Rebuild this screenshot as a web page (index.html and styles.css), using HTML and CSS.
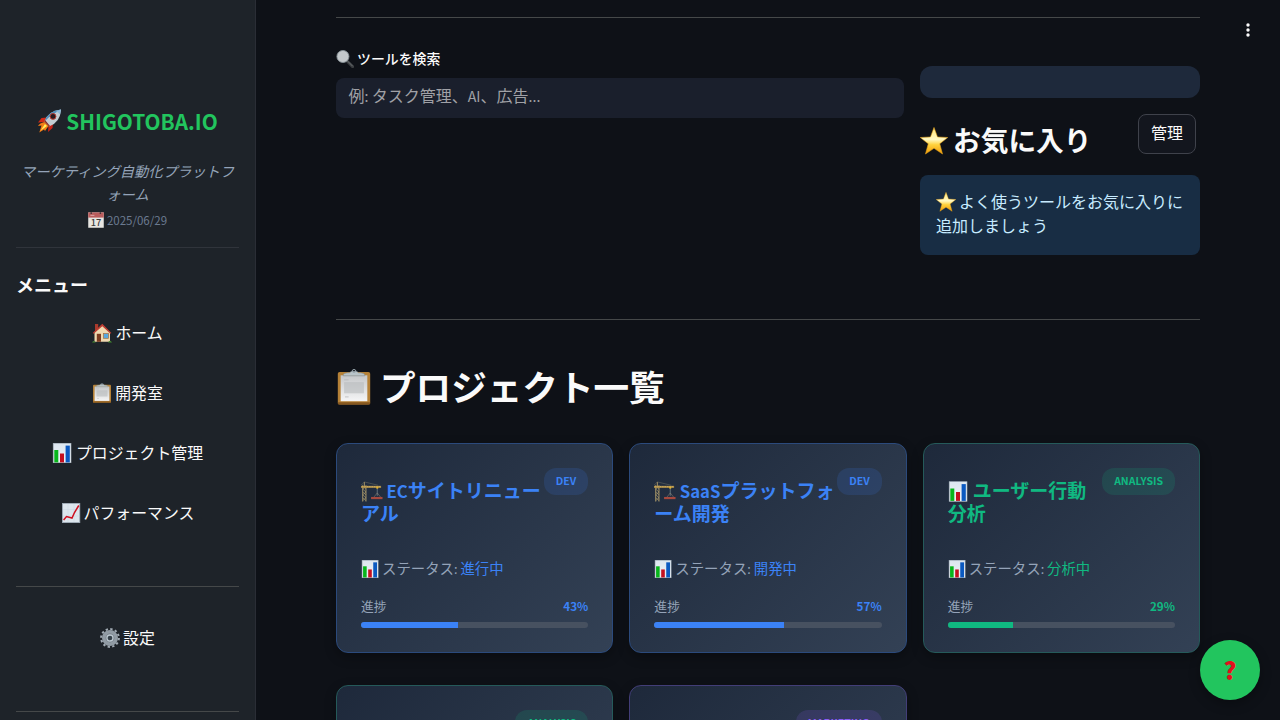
FILE: index.html
```html
<!DOCTYPE html>
<html lang="ja">
<head>
<meta charset="utf-8">
<title>SHIGOTOBA.IO</title>
<link rel="stylesheet" href="styles.css">
</head>
<body>
<svg class="defs" aria-hidden="true">
  <defs>
    <linearGradient id="gStar" x1="0" y1="0" x2="0" y2="1"><stop offset="0" stop-color="#ffe477"/><stop offset=".45" stop-color="#fff9c4"/><stop offset=".65" stop-color="#ffd23c"/><stop offset="1" stop-color="#ef9a0a"/></linearGradient>
    <linearGradient id="gSheet" x1="0" y1="0" x2="0" y2="1"><stop offset="0" stop-color="#c5c7c9"/><stop offset="1" stop-color="#f5f5f6"/></linearGradient>
    <linearGradient id="gChart" x1="0" y1="0" x2="0" y2="1"><stop offset="0" stop-color="#dce6ef"/><stop offset="1" stop-color="#eff3f7"/></linearGradient>
    <symbol id="bars" viewBox="0 0 20 20"><rect x="1.200" y=".2" width="17.800" height="19.600" fill="url(#gChart)" stroke="#a9b5c0" stroke-width=".6"/><rect x="2.300" y="7" width="4" height="12.400" fill="#08b51b"/><rect x="8" y="10.500" width="4" height="8.900" fill="#c5101f"/><rect x="13.600" y="2.600" width="4.200" height="16.800" fill="#0b59c0"/></symbol>
    <symbol id="trend" viewBox="0 0 20 20"><rect x="1.400" y=".3" width="17.400" height="19.400" fill="#dde6ed" stroke="#9facb8" stroke-width=".8"/><path d="M2 6.500H18.500M2 13H18.500M7 1V19M13 1V19" stroke="#cad6e0" stroke-width=".5"/><path d="M2.600 17L5.500 13.500L11 15L13.500 9.500L17.800 2.500" fill="none" stroke="#cf1020" stroke-width="1.500"/></symbol>
    <symbol id="clip" viewBox="0 0 20 20"><rect x="1" y="1.700" width="18" height="18" rx="1" fill="#b58137"/><rect x="1" y="18.500" width="18" height="1.200" rx=".5" fill="#85571f"/><rect x="2.600" y="3.500" width="14.800" height="14.400" fill="url(#gSheet)"/><rect x="4.500" y="7.300" width="11" height="6.200" fill="#b8babc" opacity=".6"/><path d="M4.500 6H7M5 15.500H7" stroke="#b2b4b6" stroke-width=".4"/><path d="M4 3.800C4 2.500 5 2.200 7.500 2.100L8.600 1.200H11.400L12.500 2.100C15 2.200 16 2.500 16 3.800Z" fill="#b9c4c9" stroke="#7c888d" stroke-width=".3"/><circle cx="10" cy="1.100" r=".9" fill="none" stroke="#97a6ae" stroke-width=".5"/></symbol>
    <symbol id="home" viewBox="0 0 20 20"><rect x="3" y="1" width="3.200" height="7" fill="#a93a2d"/><path d="M2.500 9L10.500 2L18 9V18.800H2.500Z" fill="#f0d9b0"/><path d="M.7 10L10.300 .8L19.400 10L18.500 10.800L10.300 3.300L1.700 10.800Z" fill="#bd3b31"/><rect x="4.800" y="10.800" width="4.200" height="8" fill="#7d3c20"/><rect x="11.500" y="10.500" width="5" height="4.800" fill="#58a8df" stroke="#a17243" stroke-width=".7"/><path d="M0 19.500Q1.500 16.500 3.800 19.500ZM16 19.500Q18 16.200 20 19.500Z" fill="#41862f"/></symbol>
    <symbol id="gear" viewBox="0 0 20 20"><circle cx="10" cy="10" r="8.900" fill="none" stroke="#a1aab3" stroke-width="2" stroke-dasharray="2.330 2.330"/><circle cx="10" cy="10" r="6.200" fill="#707981" stroke="#919ba4" stroke-width="3.600"/><circle cx="10" cy="10" r="3" fill="#36414a" stroke="#bdc9d2" stroke-width="1.300"/></symbol>
    <symbol id="rocket" viewBox="0 0 24 24"><path d="M9.500 8.500L4 9L.5 13.500L7.500 13Z" fill="#d22a18"/><path d="M15.500 14.500L15 19L10.500 23L11 16.500Z" fill="#c82217"/><path d="M7 13Q2 14 .5 17L4 16.500L1.800 23.500L6.500 20.500L7.500 22L11 17Z" fill="#f47b16"/><path d="M7.500 15L3 21.800L9.500 17Z" fill="#fff15a"/><path d="M7 12.500Q10.500 2 23.500 .6Q22.500 14 11.500 17.500Z" fill="#c4cdd3"/><path d="M7 12.500Q10.500 2 23.500 .6L16 5Q11 8 7 12.500Z" fill="#4f8ebc"/><path d="M18.500 1.900L23.500 .6L22.700 5.500Z" fill="#8db8d6"/><circle cx="15.500" cy="7.400" r="2.900" fill="#281a20" stroke="#b53b30" stroke-width="1"/><path d="M7 12.500L11.500 17.500L12.500 17L7.500 11Z" fill="#8d261b"/></symbol>
    <symbol id="cal" viewBox="0 0 20 20"><rect x=".3" y=".5" width="19.400" height="19.200" fill="#e7e5e1"/><rect x=".3" y=".5" width="19.400" height="6.500" fill="#ba5d5d"/><path d="M4 .2V2.500M15.500 .2V2.500" stroke="#413437" stroke-width="1.700"/><path d="M3 4.200H8" stroke="#dfabaa" stroke-width="1.200"/><text x="10" y="17.500" class="cal-day">17</text></symbol>
    <symbol id="lens" viewBox="0 0 20 20"><path d="M12 12L18.500 18.500" stroke="#3a3d40" stroke-width="3.300" stroke-linecap="round"/><path d="M12.500 12L18.500 18" stroke="#7b8083" stroke-width=".8"/><circle cx="7.700" cy="7.200" r="6.700" fill="#c3c8cb" stroke="#899399" stroke-width="1"/></symbol>
    <symbol id="star" viewBox="0 0 20 20"><path d="M10 .3L12.500 7.100L19.800 7.500L14.100 12L16.100 19.300L10 15.200L3.900 19.300L5.900 12L.2 7.500L7.500 7.100Z" fill="url(#gStar)" stroke="#e8a317" stroke-width=".4" stroke-linejoin="round"/></symbol>
    <symbol id="crane" viewBox="0 0 23 21"><path d="M1.800 4V21M5.200 4V21M3.500 .5V5" stroke="#a9976a" stroke-width="1"/><path d="M1.800 20L5.200 17L1.800 14L5.200 11L1.800 8L5.200 5M1.800 17L5.200 20M1.800 11L5.200 14M1.800 5L5.200 8" fill="none" stroke="#b6a26e" stroke-width=".6"/><path d="M0 4.600H21V6.700H0Z" fill="#ad8e49"/><path d="M3.500 .5L18 4M3.500 .5L0 4" stroke="#777665" stroke-width=".5"/><path d="M1 5.500H20" stroke="#e1c176" stroke-width=".6" stroke-dasharray="1.500 1"/><path d="M17 6V15" stroke="#829399" stroke-width=".7"/><rect x="16" y="5.500" width="2" height="2" fill="#e5b329"/><path d="M17 12L13 17H21Z" fill="none" stroke="#9a8d78" stroke-width=".5"/><rect x="10.500" y="16.200" width="12" height="2.300" fill="#a7493e"/></symbol>
  </defs>
</svg>
<div class="app">
  <aside class="sidebar">
    <h1 class="brand"><svg class="icon"><use href="#rocket"/></svg> <span>SHIGOTOBA.IO</span></h1>
    <p class="tagline">マーケティング自動化プラットフ<br>ォーム</p>
    <p class="date"><svg class="icon"><use href="#cal"/></svg><span>2025/06/29</span></p>
    <hr class="rule faint">
    <h2 class="menu-title">メニュー</h2>
    <nav class="menu">
      <a class="item"><svg class="icon"><use href="#home"/></svg><span>ホーム</span></a>
      <a class="item"><svg class="icon"><use href="#clip"/></svg><span>開発室</span></a>
      <a class="item wide"><svg class="icon"><use href="#bars"/></svg><span>プロジェクト管理</span></a>
      <a class="item"><svg class="icon"><use href="#trend"/></svg><span>パフォーマンス</span></a>
    </nav>
    <hr class="rule">
    <a class="item settings"><svg class="icon"><use href="#gear"/></svg><span>設定</span></a>
    <hr class="rule">
  </aside>
  <main class="main">
    <hr class="rule">
    <section class="tools">
      <div class="search">
        <label class="label"><svg class="icon"><use href="#lens"/></svg><span>ツールを検索</span></label>
        <div class="field">例<span class="lat">: </span>タスク管理、<span class="lat">AI</span>、広告<span class="lat">...</span></div>
      </div>
      <div class="favorites">
        <div class="blank"></div>
        <div class="fav-head">
          <h3 class="fav-title"><svg class="icon"><use href="#star"/></svg><span>お気に入り</span></h3>
          <button class="manage">管理</button>
        </div>
        <div class="info"><svg class="icon"><use href="#star"/></svg>よく使うツールをお気に入りに<br>追加しましょう</div>
      </div>
    </section>
    <hr class="rule">
    <h2 class="heading"><svg class="icon"><use href="#clip"/></svg><span>プロジェクト一覧</span></h2>
    <section class="cards">
      <article class="card dev">
        <header class="card-head"><h3 class="card-title"><svg class="icon crane"><use href="#crane"/></svg><span class="lat">EC</span>サイトリニュー<br>アル</h3><span class="badge">DEV</span></header>
        <p class="status"><svg class="icon"><use href="#bars"/></svg>ステータス<span class="lat">: </span><span class="accent">進行中</span></p>
        <div class="progress-row"><span>進捗</span><b class="percent">43%</b></div>
        <div class="track"><div class="fill" style="width:42.800%"></div></div>
      </article>
      <article class="card dev">
        <header class="card-head"><h3 class="card-title"><svg class="icon crane"><use href="#crane"/></svg><span class="lat">SaaS</span>プラットフォ<br>ーム開発</h3><span class="badge">DEV</span></header>
        <p class="status"><svg class="icon"><use href="#bars"/></svg>ステータス<span class="lat">: </span><span class="accent">開発中</span></p>
        <div class="progress-row"><span>進捗</span><b class="percent">57%</b></div>
        <div class="track"><div class="fill" style="width:57%"></div></div>
      </article>
      <article class="card analysis">
        <header class="card-head"><h3 class="card-title"><svg class="icon"><use href="#bars"/></svg>ユーザー行動<br>分析</h3><span class="badge">ANALYSIS</span></header>
        <p class="status"><svg class="icon"><use href="#bars"/></svg>ステータス<span class="lat">: </span><span class="accent">分析中</span></p>
        <div class="progress-row"><span>進捗</span><b class="percent">29%</b></div>
        <div class="track"><div class="fill" style="width:28.600%"></div></div>
      </article>
      <article class="card analysis"><header class="card-head end"><span class="badge">ANALYSIS</span></header></article>
      <article class="card marketing"><header class="card-head end"><span class="badge">MARKETING</span></header></article>
    </section>
  </main>
  <svg class="kebab" viewBox="0 0 6 14"><circle cx="3" cy="2" r="1.700"/><circle cx="3" cy="7" r="1.700"/><circle cx="3" cy="12" r="1.700"/></svg>
  <button class="help">?</button>
</div>
</body>
</html>
```
FILE: styles.css
```css
* { box-sizing: border-box; margin: 0; padding: 0; }
body {
  font-family: "Noto Sans CJK JP", sans-serif;
  font-size: 16px;
  color: #fafafa;
  background: #0e1117;
  overflow: hidden;
}
.defs { position: absolute; width: 0; height: 0; }
.app { display: flex; width: 1280px; height: 720px; overflow: hidden; position: relative; white-space: nowrap; }
.icon { display: inline-block; flex: none; width: 20px; height: 20px; overflow: visible; }
.lat { font-size: 0.89em; }
.cal-day { font-size: 11.5px; font-weight: 500; fill: #3b3b3b; text-anchor: middle; }
.rule { border: 0; height: 1px; background: #454849; }
.rule.faint { background: #30343b; }

.sidebar { width: 256px; flex: none; padding: 0 16px; background: #1e2329; border-right: 1px solid #2a2d35; }
.brand { display: flex; justify-content: center; align-items: center; gap: 4px; margin-top: 104px; height: 34px; line-height: 36px; font-size: 20.8px; font-weight: 700; color: #22c55e; }
.brand .icon { width: 25px; height: 24px; }
.tagline { margin: 21px -8px 0; line-height: 23px; font-size: 14.3px; font-style: italic; text-align: center; color: #94a3b8; }
.date { display: flex; justify-content: center; align-items: center; gap: 3px; height: 20px; margin-top: 5px; line-height: 20px; font-size: 11.5px; color: #6b7a90; }
.date .icon { width: 16px; height: 16px; }
.sidebar .faint { margin-top: 17px; }
.menu-title { margin-top: 23px; height: 26px; line-height: 26px; font-size: 18px; font-weight: 700; }
.menu { display: flex; flex-direction: column; gap: 20px; margin-top: 15px; margin-bottom: 54px; }
.item { display: flex; justify-content: center; align-items: center; gap: 3px; height: 40px; line-height: 40px; font-size: 15.9px; }
.item.wide { gap: 4px; }
.menu .item { padding-top: 1px; }
.settings { margin: 31px 0 53px; }

.main { width: 864px; margin-left: 80px; padding-top: 17px; flex: none; }
.tools { display: grid; grid-template-columns: 568px 280px; gap: 16px; height: 301px; }
.search { padding-top: 31px; }
.label { display: flex; align-items: center; gap: 3px; height: 20px; line-height: 19px; font-size: 13.9px; font-weight: 500; }
.label .icon { width: 18px; height: 18px; }
.label span { margin-top: -1px; }
.field { height: 40px; margin-top: 9px; padding-left: 12.5px; border-radius: 8px; background: #1a1f2c; line-height: 35px; color: #a0a1a6; }
.favorites { padding-top: 48px; }
.blank { height: 32px; border-radius: 12px; background: #1e293b; }
.fav-head { display: flex; justify-content: space-between; align-items: flex-start; padding: 16px 4px 0 0; height: 77px; }
.fav-title { display: flex; align-items: center; gap: 5px; height: 54px; line-height: 50px; font-size: 27.7px; font-weight: 700; }
.fav-title .icon { width: 28px; height: 28px; }
.fav-title span { margin-top: -4px; }
.manage { display: flex; justify-content: center; width: 58px; height: 40px; border: 1px solid #3f424b; border-radius: 8px; background: #13161e; color: #fafafa; font: 400 16px/35px "Noto Sans CJK JP", sans-serif; }
.info { height: 80px; padding: 14px 16px; border-radius: 8px; background: #182d44; color: #c7ebff; line-height: 24px; }
.info .icon { margin-right: 3px; vertical-align: -4px; }

.heading { display: flex; align-items: center; gap: 8px; height: 52px; line-height: 52px; margin: 41px 0 30px; font-size: 35.6px; font-weight: 700; }
.heading .icon { width: 36px; height: 36px; }
.heading span { margin-top: -3px; }
.cards { display: grid; grid-template-columns: repeat(3, 1fr); column-gap: 16px; row-gap: 32px; }
.card { height: 210px; padding: 24px; border: 1px solid var(--edge); border-radius: 12px; background: linear-gradient(135deg, #1e293b, #334155); box-shadow: 0 4px 12px rgba(0, 0, 0, 0.3); }
.dev { --tone: #3b82f6; --soft: rgba(59, 130, 246, 0.15); --edge: #2b4a7c; }
.analysis { --tone: #10b981; --soft: rgba(16, 185, 129, 0.15); --edge: #255a5a; }
.marketing { --tone: #8b5cf6; --soft: rgba(139, 92, 246, 0.15); --edge: #423e78; }
.card-head { display: flex; justify-content: space-between; align-items: flex-start; height: 88px; }
.card-head.end { justify-content: flex-end; }
.card-title { width: 0; padding-top: 10px; font-size: 19px; line-height: 23px; font-weight: 600; color: var(--tone); }
.card-title .lat { font-size: 0.88em; line-height: 0; }
.card-title .icon { height: 21px; margin: -4px 5px -4px 0; vertical-align: 0; }
.card-title .crane { width: 22px; margin-right: 3.5px; }
.badge { height: 27px; padding: 0 12px; border-radius: 12px; background: var(--soft); color: var(--tone); font-size: 10.5px; line-height: 26px; font-weight: 700; }
.status { height: 24px; line-height: 24px; font-size: 14.4px; color: #94a3b8; }
.status .icon { width: 18px; height: 18px; margin-right: 3px; vertical-align: -4px; }
.accent { color: var(--tone); }
.progress-row { display: flex; justify-content: space-between; margin-top: 15px; height: 20px; line-height: 22px; font-size: 12.8px; color: #94a3b8; }
.percent { font-size: 11.7px; color: var(--tone); }
.track { height: 6px; margin-top: 7px; border-radius: 3px; background: #475160; overflow: hidden; }
.fill { height: 100%; background: var(--tone); }

.kebab { position: absolute; left: 1245px; top: 23px; width: 6px; height: 14px; fill: #fafafa; }
.help { position: absolute; left: 1200px; top: 640px; width: 60px; height: 60px; border: 0; border-radius: 50%; background: #22c55e; color: #e3101c; font: 900 24px/58px "Noto Sans CJK JP", sans-serif; box-shadow: 0 4px 12px rgba(0, 0, 0, 0.3); }
```
